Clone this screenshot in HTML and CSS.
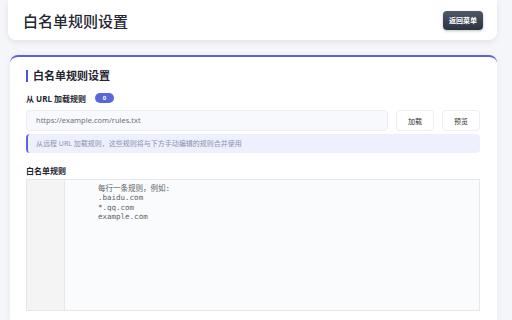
FILE: index.html
```html
<!DOCTYPE html>
<html lang="zh-CN">
<head>
  <meta charset="UTF-8" />
  <meta name="viewport" content="width=device-width, initial-scale=1.0" />
  <title>白名单规则设置</title>
  <link rel="stylesheet" href="styles.css">
</head>
<body>
  <div class="page">
    <header class="header">
      <h1>白名单规则设置</h1>
      <button class="back-btn">返回菜单</button>
    </header>

    <section class="panel">
      <h2 class="panel-title">白名单规则设置</h2>

      <div class="field-label">
        <span>从 URL 加载规则</span>
        <span class="badge">0</span>
      </div>
      <div class="url-row">
        <div class="url-input">https://example.com/rules.txt</div>
        <button class="ghost-btn">加载</button>
        <button class="ghost-btn">预览</button>
      </div>
      <div class="hint">从远程 URL 加载规则，这些规则将与下方手动编辑的规则合并使用</div>

      <div class="field-label rules-label">白名单规则</div>
      <div class="editor">
        <div class="gutter"></div>
        <pre class="code">每行一条规则，例如:
.baidu.com
*.qq.com
example.com</pre>
      </div>
    </section>
  </div>
</body>
</html>
```

FILE: styles.css
```css
body {
  margin: 0;
  background: #f5f6fa;
  font-family: "Noto Sans", "Noto Sans CJK SC", sans-serif;
  color: #1f2430;
  overflow: hidden;
}
.page { padding: 0 15px 0 8px; }

.header {
  height: 40px;
  background: #fff;
  border-radius: 0 0 8px 8px;
  box-shadow: 0 2px 6px rgba(0,0,0,0.08);
  display: flex;
  align-items: center;
  justify-content: space-between;
  padding: 0 14px 0 15px;
}
.header h1 { margin: 0; font-size: 15px; font-weight: 500; color: #23262e; }
.back-btn {
  height: 19px;
  padding: 0 6px;
  border: none;
  border-radius: 4px;
  background: linear-gradient(180deg, #4f5868, #2b3240);
  color: #fff;
  font-family: inherit;
  font-size: 7px;
  font-weight: 600;
  box-shadow: 0 1px 3px rgba(0,0,0,0.25);
}

.panel {
  margin: 15px 0 0 2px;
  height: 250px;
  background: #fff;
  border-top: 2px solid #5a60d8;
  border-radius: 8px 8px 0 0;
  box-shadow: 0 2px 8px rgba(0,0,0,0.06);
  padding: 13px 17px 0 16px;
}
.panel-title {
  margin: 0 0 11px 0;
  font-size: 11px;
  font-weight: 600;
  line-height: 12px;
  border-left: 2px solid #4a56d6;
  padding-left: 5px;
}
.field-label {
  display: flex;
  align-items: center;
  gap: 9px;
  font-size: 8px;
  font-weight: 700;
  height: 10px;
  margin-bottom: 7px;
}
.badge {
  background: #5a67d8;
  color: #fff;
  border-radius: 6px;
  width: 19px;
  height: 10px;
  font-size: 6px;
  line-height: 10px;
  text-align: center;
}
.url-row { display: flex; gap: 8px; }
.url-input {
  flex: 1;
  height: 19px;
  line-height: 19px;
  padding-left: 9px;
  background: #f8f9fc;
  border: 1px solid #eceef3;
  border-radius: 4px;
  font-size: 7.5px;
  color: #6b7280;
}
.ghost-btn {
  width: 38px;
  height: 21px;
  background: #fff;
  border: 1px solid #eceef2;
  border-radius: 4px;
  font-family: inherit;
  font-size: 7px;
  color: #333;
}
.hint {
  margin-top: 3px;
  height: 19px;
  line-height: 19px;
  background: #eef0fd;
  border-left: 2px solid #5a67d8;
  border-radius: 4px;
  padding-left: 8px;
  font-size: 7px;
  color: #8a90b4;
}
.rules-label { margin-top: 12px; margin-bottom: 4px; }
.editor {
  display: flex;
  height: 130px;
  border: 1px solid #e6e7ea;
  background: #fafbfc;
}
.gutter { width: 37px; background: #f4f4f5; border-right: 1px solid #e6e7ea; }
.code {
  margin: 0;
  padding: 4px 0 0 33px;
  font-family: "DejaVu Sans Mono", "Noto Sans CJK SC", monospace;
  font-size: 7.5px;
  line-height: 9.4px;
  color: #5b5f66;
}
```
